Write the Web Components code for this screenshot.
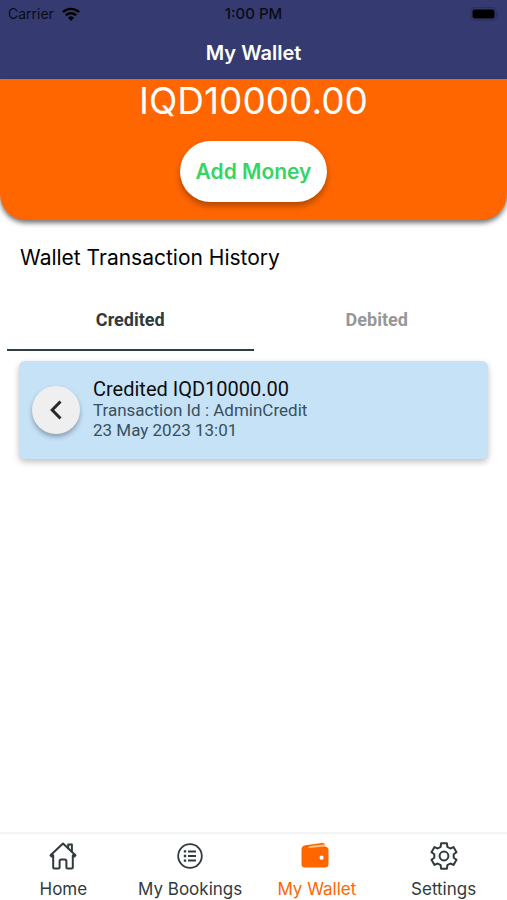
<!DOCTYPE html>
<html lang="en">
<head>
<meta charset="UTF-8">
<meta name="viewport" content="width=device-width, initial-scale=1.0">
<title>My Wallet</title>
<style>
    body {
        margin: 0;
        background: #fff;
        font-family: Inter, 'Liberation Sans', sans-serif;
    }
</style>
</head>
<body>
<wallet-app>
    <status-bar slot="header" carrier="Carrier" time="1:00 PM"></status-bar>
    <title-bar slot="header">My Wallet</title-bar>

    <wallet-balance amount="IQD10000.00">Add Money</wallet-balance>
    <section-title>Wallet Transaction History</section-title>
    <tab-strip>
        <tab-item selected>Credited</tab-item>
        <tab-item>Debited</tab-item>
    </tab-strip>
    <transaction-card>
        Credited IQD10000.00
        <span slot="id">Transaction Id : AdminCredit</span>
        <span slot="date">23 May 2023 13:01</span>
    </transaction-card>

    <nav-bar slot="footer">
        <nav-item icon="home">Home</nav-item>
        <nav-item icon="bookings">My Bookings</nav-item>
        <nav-item icon="wallet" active>My Wallet</nav-item>
        <nav-item icon="settings">Settings</nav-item>
    </nav-bar>
</wallet-app>

<script>
const icons = {
    home: `<svg viewBox="0 0 28 28" fill="none" stroke="currentColor" stroke-width="2" stroke-linejoin="round" stroke-linecap="round">
        <path d="M1.5 13.2 14 1.5l12.500 11.700-1.200 1.300-1.500-1.200v12.200q0 1.100-1.100 1.100h-4.200q-1.100 0-1.100-1.100v-6.300q0-1.800-1.800-1.800h-3.200q-1.800 0-1.800 1.800v6.300q0 1.100-1.100 1.100H5.300q-1.100 0-1.100-1.100V13.300l-1.500 1.200z"/>
        <path d="M19.200 6V2.400h3.700v7"/>
    </svg>`,
    bookings: `<svg viewBox="0 0 28 28" fill="none" stroke="currentColor">
        <circle cx="14" cy="14" r="11.8" stroke-width="1.8"/>
        <path d="M12 9.400h8M12 14h8M12 18.600h8" stroke-width="2"/>
        <path d="M7.800 9.400h2.400M7.800 14h2.400M7.800 18.600h2.400" stroke-width="2.4"/>
    </svg>`,
    wallet: `<svg viewBox="0 0 28 28">
        <path fill="currentColor" d="M-1.500 7.500C-1.500 5 0 3.800 2.500 3.300L18.500.9C20.500.6 22 1.600 22 3.600v.8c2.300.2 3.500 1.600 3.500 3.600v14q0 3.500-3.500 3.500H2q-3.500 0-3.500-3.500z"/>
        <path fill="#ffc58f" d="M5 5.400 7.500 4 20.500 2.500q1.300-.1 1.500 1v1L5.500 5.900z"/>
        <circle cx="18.600" cy="15.700" r="2.100" fill="#fff"/>
    </svg>`,
    settings: `<svg viewBox="0 0 28 28" fill="none" stroke="currentColor" stroke-width="2" stroke-linejoin="round">
        <path d="M10.650 4.800 11.100 1.300H16.900L17.350 4.800 20.300 6.500 23.500 5.100 26.500 10.200 23.700 12.300V15.700L26.500 17.800 23.500 22.900 20.300 21.500 17.350 23.200 16.900 26.700H11.100L10.650 23.200 7.700 21.500 4.500 22.900 1.500 17.800 4.300 15.700V12.300L1.500 10.200 4.500 5.100 7.700 6.500z"/>
        <circle cx="14" cy="14" r="4.400"/>
    </svg>`
};

// Page frame: header on top, footer kept at the bottom of the window
class WalletApp extends HTMLElement {
    constructor() {
        super();
        this.attachShadow({ mode: 'open' }).innerHTML = `
        <style>
            :host {
                display: flex;
                flex-direction: column;
                min-height: 100vh;
            }

            header {
                background: #353b70;
            }

            main {
                flex: 1;
            }
        </style>
        <header><slot name="header"></slot></header>
        <main><slot></slot></main>
        <slot name="footer"></slot>
        `;
    }
}

class StatusBar extends HTMLElement {
    constructor() {
        super();
        const carrier = this.getAttribute('carrier') || '';
        const time = this.getAttribute('time') || '';

        this.attachShadow({ mode: 'open' }).innerHTML = `
        <style>
            :host {
                display: grid;
                grid-template-columns: 1fr auto 1fr;
                align-items: center;
                height: 27px;
                padding: 0 8px;
                font-size: 14px;
                color: #0a0b16;
            }

            .carrier {
                display: flex;
                align-items: center;
                gap: 8px;
            }

            .time {
                font-size: 15px;
                font-weight: 500;
            }

            .battery {
                justify-self: end;
            }

            svg {
                display: block;
            }
        </style>
        <div class="carrier">
            <span>${carrier}</span>
            <svg width="18" height="14" viewBox="0 0 18 14" fill="none" stroke="#000" stroke-width="2.4">
                <path d="M.9 5.200a11.500 11.500 0 0 1 16.200 0M3.900 8.300a7.200 7.200 0 0 1 10.200 0"/>
                <path d="M9 14 6 10.800a4.300 4.300 0 0 1 6 0z" fill="#000" stroke="none"/>
            </svg>
        </div>
        <span class="time">${time}</span>
        <svg class="battery" width="29" height="14" viewBox="0 0 29 14">
            <rect x=".7" y=".7" width="25.600" height="12.600" rx="4" fill="none" stroke="#2b3060" stroke-width="1.200"/>
            <rect x="2.500" y="2.500" width="22" height="9" rx="2" fill="#000"/>
            <path d="M27.500 5v4q1.300-.6 1.300-2t-1.300-2" fill="#2b3060"/>
        </svg>
        `;
    }
}

class TitleBar extends HTMLElement {
    constructor() {
        super();
        this.attachShadow({ mode: 'open' }).innerHTML = `
        <style>
            :host {
                display: block;
            }

            h1 {
                margin: 0;
                font-size: 20px;
                font-weight: 600;
                line-height: 52px;
                text-align: center;
                color: #fff;
            }
        </style>
        <h1><slot></slot></h1>
        `;
    }
}

class WalletBalance extends HTMLElement {
    constructor() {
        super();
        const amount = this.getAttribute('amount') || '0.00';

        this.attachShadow({ mode: 'open' }).innerHTML = `
        <style>
            :host {
                display: flex;
                flex-direction: column;
                align-items: center;
                gap: 18px;
                padding-bottom: 18px;
                border-radius: 0 0 26px 26px;
                background: #ff6600;
                box-shadow: 0 3px 5px rgba(0, 0, 0, 0.55);
            }

            .amount {
                font-size: 37px;
                line-height: 44px;
                color: #fff;
            }

            button {
                padding: 0 16px;
                border: 0;
                border-radius: 31px;
                background: #fff;
                box-shadow: 0 4px 6px rgba(0, 0, 0, 0.3);
                font: 600 21px/61px Inter, 'Liberation Sans', sans-serif;
                color: #34d565;
                cursor: pointer;
            }
        </style>
        <div class="amount">${amount}</div>
        <button type="button"><slot></slot></button>
        `;
    }
}

class SectionTitle extends HTMLElement {
    constructor() {
        super();
        this.attachShadow({ mode: 'open' }).innerHTML = `
        <style>
            :host {
                display: block;
                padding: 24px 20px;
            }

            h2 {
                margin: 0;
                font-size: 21px;
                font-weight: 400;
                line-height: 28px;
                color: #000;
            }
        </style>
        <h2><slot></slot></h2>
        `;
    }
}

class TabStrip extends HTMLElement {
    constructor() {
        super();
        this.attachShadow({ mode: 'open' }).innerHTML = `
        <style>
            :host {
                display: flex;
                margin: 0 7px;
            }
        </style>
        <slot></slot>
        `;
    }
}

class TabItem extends HTMLElement {
    constructor() {
        super();
        const selected = this.hasAttribute('selected');

        this.attachShadow({ mode: 'open' }).innerHTML = `
        <style>
            :host {
                flex: 1;
            }

            button {
                width: 100%;
                height: 55px;
                padding: 0 0 5px;
                border: 0;
                border-bottom: 2px solid transparent;
                background: none;
                font: 700 18px/24px Roboto, 'Liberation Sans', sans-serif;
                color: #979797;
                cursor: pointer;
            }

            :host([selected]) button {
                border-color: #2f3e41;
                color: #2f3a3c;
            }
        </style>
        <button type="button" aria-pressed="${selected}"><slot></slot></button>
        `;
    }
}

class TransactionCard extends HTMLElement {
    constructor() {
        super();
        this.attachShadow({ mode: 'open' }).innerHTML = `
        <style>
            :host {
                display: flex;
                align-items: center;
                gap: 13px;
                margin: 10px 19px;
                padding: 17px 13px;
                border-radius: 6px;
                background: #c6e2f7;
                box-shadow: 0 3px 6px rgba(0, 0, 0, 0.25);
                font-family: Roboto, 'Liberation Sans', sans-serif;
            }

            button {
                display: grid;
                place-items: center;
                width: 48px;
                height: 48px;
                padding: 0;
                border: 0;
                border-radius: 50%;
                background: #efeff0;
                box-shadow: 0 3px 5px rgba(0, 0, 0, 0.3);
                cursor: pointer;
            }

            .text {
                padding-bottom: 2px;
            }

            .name {
                font-size: 20px;
                line-height: 22px;
                color: #0b0d0f;
            }

            .detail {
                font-size: 17px;
                line-height: 20px;
                color: #38505c;
            }
        </style>
        <button type="button" aria-label="Details">
            <svg width="12" height="20" viewBox="0 0 12 20" fill="none" stroke="#262829" stroke-width="3">
                <path d="M10.500 1.500 2.200 10l8.300 8.500"/>
            </svg>
        </button>
        <div class="text">
            <div class="name"><slot></slot></div>
            <div class="detail"><slot name="id"></slot></div>
            <div class="detail"><slot name="date"></slot></div>
        </div>
        `;
    }
}

class NavBar extends HTMLElement {
    constructor() {
        super();
        this.attachShadow({ mode: 'open' }).innerHTML = `
        <style>
            :host {
                display: block;
            }

            nav {
                display: grid;
                grid-template-columns: repeat(4, 1fr);
                border-top: 2px solid #f3f4f4;
                background: #fff;
            }
        </style>
        <nav><slot></slot></nav>
        `;
    }
}

class NavItem extends HTMLElement {
    constructor() {
        super();
        const icon = this.getAttribute('icon') || 'home';

        this.attachShadow({ mode: 'open' }).innerHTML = `
        <style>
            :host {
                display: block;
            }

            a {
                display: flex;
                flex-direction: column;
                align-items: center;
                gap: 8px;
                padding: 8px 0 0;
                font-size: 17px;
                line-height: 22px;
                white-space: nowrap;
                text-decoration: none;
                color: #303a3d;
            }

            :host([active]) a {
                color: #ff6600;
            }

            svg {
                display: block;
                width: 28px;
                height: 28px;
                overflow: visible;
            }
        </style>
        <a href="#${icon}">${icons[icon]}<span><slot></slot></span></a>
        `;
    }
}

customElements.define('wallet-app', WalletApp);
customElements.define('status-bar', StatusBar);
customElements.define('title-bar', TitleBar);
customElements.define('wallet-balance', WalletBalance);
customElements.define('section-title', SectionTitle);
customElements.define('tab-strip', TabStrip);
customElements.define('tab-item', TabItem);
customElements.define('transaction-card', TransactionCard);
customElements.define('nav-bar', NavBar);
customElements.define('nav-item', NavItem);
</script>
</body>
</html>
